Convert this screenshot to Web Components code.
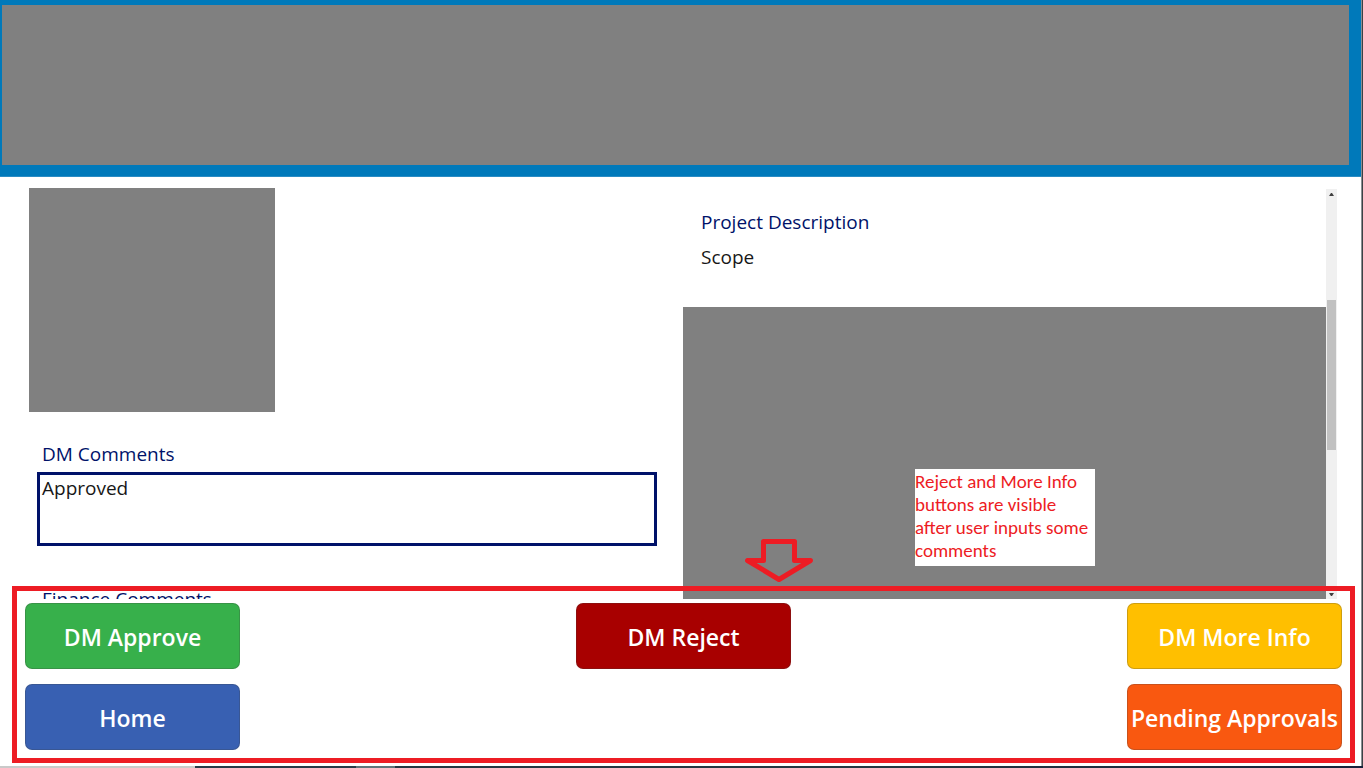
<!DOCTYPE html>
<html lang="en">
<head>
<meta charset="utf-8">
<title>Project approval</title>
<style>
html, body { height: 100%; margin: 0; }
body { font-family: "Open Sans", "Noto Sans", sans-serif; background: #fff; overflow: hidden; }
</style>
</head>
<body>
<approval-app></approval-app>
<script>
const define = (name, html, setup) => {
  const template = document.createElement('template');
  template.innerHTML = html;
  customElements.define(name, class extends HTMLElement {
    constructor() {
      super();
      this.attachShadow({ mode: 'open' }).append(template.content.cloneNode(true));
    }
    connectedCallback() { if (setup) setup(this, this.shadowRoot); }
  });
};

define('app-banner', `
<style>
:host { display: block; box-sizing: border-box; height: 177px; padding: 5px 12px 12px 2px; background: #0079ba; border-bottom: 1px solid #2a8cc4; }
div { height: 160px; background: #808080; }
</style><div></div>`);

define('read-field', `
<style>
:host { display: block; font-size: 19px; line-height: 26px; color: #171717; }
dl, dd { margin: 0; }
dt { color: #001269; margin-bottom: 9px; }
</style><dl><dt><slot name="label"></slot></dt><dd><slot></slot></dd></dl>`);

define('comment-field', `
<style>
:host { display: block; font-size: 19px; line-height: 26px; }
label { display: block; color: #001269; padding: 0 5px; margin-bottom: 5px; }
textarea { display: block; box-sizing: border-box; width: 100%; height: 74px; margin: 0; padding: 0 2px; border: 3px solid #001269; border-radius: 0; resize: none; outline: 0; overflow: hidden; background: #fff; color: #171717; font: inherit; }
</style><label for="box"></label><textarea id="box"></textarea>`, (host, root) => {
  root.querySelector('label').textContent = host.getAttribute('label');
  root.querySelector('textarea').value = host.getAttribute('value') || '';
});

define('scroll-track', `
<style>
:host { display: flex; flex-direction: column; align-items: center; box-sizing: border-box; background: #f0f0f0; margin-top: 1px; padding: 4px 0 3px; }
svg { display: block; width: 5px; height: 3px; fill: #404040; }
.rail { flex: 1; width: 100%; display: grid; grid-template-rows: 104fr 149fr 143fr; }
.thumb { grid-row: 2; background: #c1c1c1; margin: 0 1px; }
</style>
<svg viewBox="0 0 5 3"><path d="M2 0h1l2 3H0z"/></svg>
<div class="rail"><div class="thumb"></div></div>
<svg viewBox="0 0 5 3"><path d="M0 0h5L3 3H2z"/></svg>`);

define('action-button', `
<style>
:host { display: block; width: 215px; }
button { display: block; box-sizing: border-box; width: 100%; height: 66px; padding: 2px 0 0; border: 1px solid rgba(60,60,60,.25); border-radius: 7px; background: var(--fill) border-box; color: #fff; font: 600 23px/30px "Open Sans", "Noto Sans", sans-serif; white-space: nowrap; }
</style><button type="button"><slot></slot></button>`);

define('callout-note', `
<style>
:host { display: block; box-sizing: border-box; width: 180px; background: #fff; color: #ed1c24; font: 19px/23px Carlito, Lato, sans-serif; padding: 1px 0 4px; white-space: nowrap; }
</style><slot></slot>`);

define('down-arrow', `
<style>
:host { display: block; }
svg { display: block; width: 68px; height: 43px; }
</style>
<svg viewBox="0 0 68 43" fill="none" stroke="#ed1c24" stroke-width="5" stroke-linejoin="round"><path d="M18.500 2.500H49.500V21.500H65.500L34 40.500L2.500 21.500H18.500Z"/></svg>`);

define('approval-app', `
<style>
:host { display: grid; grid-template-columns: minmax(0,1fr) 2px; grid-template-rows: 1fr 2px; height: 100%; }
.page { display: flex; flex-direction: column; min-height: 0; }
.edge { background: linear-gradient(90deg, #8a8f94 50%, #3c4245 50%); }
.taskbar { grid-column: 1 / -1; background: linear-gradient(90deg, #c9c9c9 195px, #263b48 195px 356px, #5f747a 356px 395px, #243742 395px 900px, #17233c); }
main { flex: 1; min-height: 0; display: grid; grid-template-columns: 654fr 643fr 11px; padding: 11px 24px 0 29px; }
.left, .right { display: flex; flex-direction: column; min-height: 0; overflow: hidden; }
.photo { flex: none; width: 246px; height: 224px; background: #808080; }
comment-field { flex: none; margin: 29px 26px 0 8px; }
comment-field + comment-field { margin-top: 40px; }
read-field { padding: 21px 18px 37px; }
.document { flex: 1; min-height: 0; background: #808080; position: relative; }
callout-note { position: absolute; left: 232px; top: 162px; }
down-arrow { position: absolute; left: 62px; bottom: 17px; }
footer { position: relative; display: flex; flex-direction: column; gap: 15px; padding: 4px 19px 16px 25px; }
.row { display: flex; justify-content: space-between; }
.frame { position: absolute; inset: -13px 6px 3px 12px; border: 5px solid #ed1c24; pointer-events: none; }
</style>
<div class="page">
  <app-banner></app-banner>
  <main>
    <section class="left">
      <div class="photo"></div>
      <comment-field label="DM Comments" value="Approved"></comment-field>
      <comment-field label="Finance Comments"></comment-field>
    </section>
    <section class="right">
      <read-field><span slot="label">Project Description</span>Scope</read-field>
      <div class="document">
        <callout-note>Reject and More Info<br>buttons are visible<br>after user inputs some<br>comments</callout-note>
        <down-arrow></down-arrow>
      </div>
    </section>
    <scroll-track></scroll-track>
  </main>
  <footer>
    <div class="row">
      <action-button style="--fill:#37b04b">DM Approve</action-button>
      <action-button style="--fill:#a80000">DM Reject</action-button>
      <action-button style="--fill:#ffbf00">DM More Info</action-button>
    </div>
    <div class="row">
      <action-button style="--fill:#3860b2">Home</action-button>
      <action-button style="--fill:#f95810">Pending Approvals</action-button>
    </div>
    <div class="frame"></div>
  </footer>
</div>
<div class="edge"></div>
<div class="taskbar"></div>`);
</script>
</body>
</html>
